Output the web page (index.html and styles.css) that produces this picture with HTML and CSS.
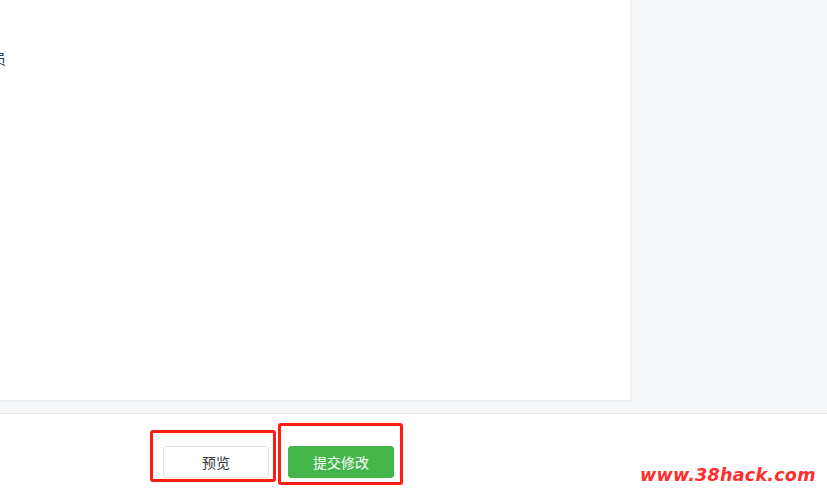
FILE: index.html
```html
<!DOCTYPE html>
<html lang="zh-CN">
<head>
  <meta charset="UTF-8">
  <meta name="viewport" content="width=device-width, initial-scale=1.0">
  <title>编辑</title>
  <link rel="stylesheet" href="styles.css">
</head>
<body>
  <div class="main">
    <div class="panel">
      <p class="panel-text">成员</p>
    </div>
  </div>
  <div class="footer">
    <button class="btn btn-default">预览</button>
    <button class="btn btn-primary">提交修改</button>
    <div class="mark mark-preview"></div>
    <div class="mark mark-submit"></div>
    <div class="watermark">www.38hack.com</div>
  </div>
</body>
</html>
```

FILE: styles.css
```css
* {
  margin: 0;
  padding: 0;
  box-sizing: border-box;
}
body {
  background: #fff;
  font-family: "Liberation Sans", "Noto Sans CJK SC", sans-serif;
  font-size: 14px;
  color: #353535;
  width: 827px;
  height: 500px;
  overflow: hidden;
}
.main {
  height: 414px;
  background: #f5f6f8;
  border-bottom: 1px solid #e2e4e7;
}
.panel {
  width: 630px;
  height: 400px;
  background: #fff;
  box-shadow: 1px 1px 2px rgba(0,0,0,0.06);
  padding-top: 49px;
  overflow: hidden;
}
.panel-text {
  margin-left: -22px;
  font-size: 14px;
  line-height: 20px;
  color: #2d3a4e;
}

/* footer buttons */
.footer {
  position: relative;
  height: 86px;
  display: flex;
  gap: 19px;
  padding: 32px 0 0 163px;
}
.btn {
  width: 106px;
  height: 32px;
  border-radius: 3px;
  font-family: "Noto Sans CJK SC", sans-serif;
  font-size: 14px;
  cursor: pointer;
}
.btn-default {
  background: #fff;
  border: 1px solid #e0e1e2;
  color: #353535;
}
.btn-primary {
  background: #44b549;
  border: 1px solid #44b549;
  color: #fff;
}

/* annotation boxes */
.mark {
  position: absolute;
  border: 3px solid #ff1d12;
  border-radius: 3px;
  pointer-events: none;
}
.mark-preview {
  left: 150px;
  top: 16px;
  width: 126px;
  height: 52px;
}
.mark-submit {
  left: 278px;
  top: 9px;
  width: 125px;
  height: 62px;
}
.watermark {
  position: absolute;
  left: 640px;
  top: 51px;
  font-family: "DejaVu Sans", sans-serif;
  font-weight: bold;
  font-style: italic;
  font-size: 17.6px;
  color: #ff2d2d;
  letter-spacing: 0.2px;
}
```
